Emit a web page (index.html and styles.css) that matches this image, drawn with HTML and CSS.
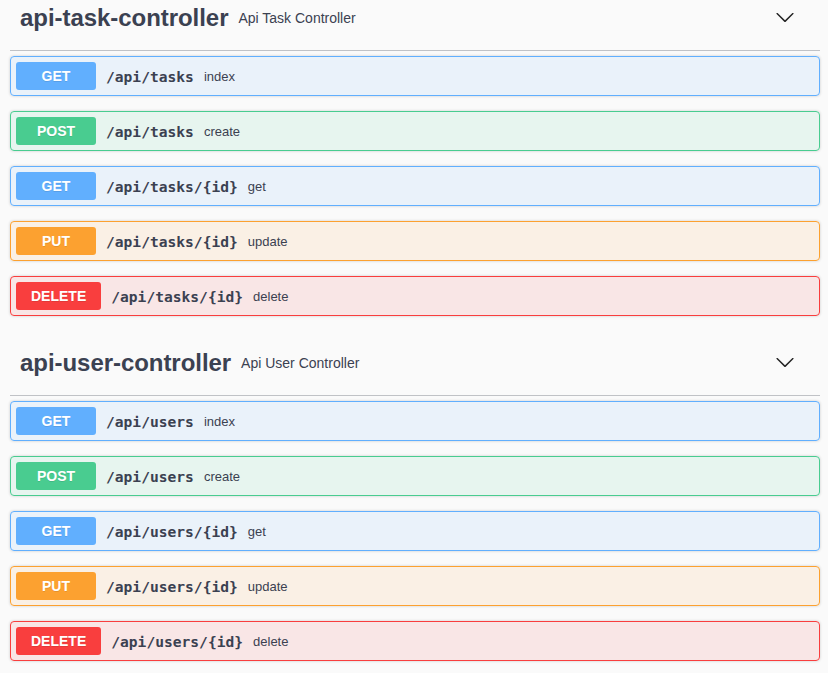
FILE: index.html
```html
<!DOCTYPE html>
<html>
<head>
<meta charset="utf-8">
<link rel="stylesheet" href="styles.css">
</head>
<body>
<div class="page">
  <section class="tag-section">
    <h3 class="tag">
      <span class="tag-name">api-task-controller</span>
      <small class="tag-desc">Api Task Controller</small>
      <svg class="arrow" viewBox="0 0 20 20" width="20" height="20"><path d="M17.418 6.109c.272-.268.709-.268.979 0s.271.701 0 .969l-7.908 7.83c-.27.268-.707.268-.979 0l-7.908-7.830c-.27-.268-.27-.701 0-.969.271-.268.709-.268.979 0L10 13.25l7.418-7.141z"/></svg>
    </h3>
    <div class="opblock get"><span class="method">GET</span><span class="path">/api/tasks</span><span class="desc">index</span></div>
    <div class="opblock post"><span class="method">POST</span><span class="path">/api/tasks</span><span class="desc">create</span></div>
    <div class="opblock get"><span class="method">GET</span><span class="path">/api/tasks/{id}</span><span class="desc">get</span></div>
    <div class="opblock put"><span class="method">PUT</span><span class="path">/api/tasks/{id}</span><span class="desc">update</span></div>
    <div class="opblock delete"><span class="method">DELETE</span><span class="path">/api/tasks/{id}</span><span class="desc">delete</span></div>
  </section>
  <section class="tag-section">
    <h3 class="tag">
      <span class="tag-name">api-user-controller</span>
      <small class="tag-desc">Api User Controller</small>
      <svg class="arrow" viewBox="0 0 20 20" width="20" height="20"><path d="M17.418 6.109c.272-.268.709-.268.979 0s.271.701 0 .969l-7.908 7.83c-.27.268-.707.268-.979 0l-7.908-7.830c-.27-.268-.27-.701 0-.969.271-.268.709-.268.979 0L10 13.25l7.418-7.141z"/></svg>
    </h3>
    <div class="opblock get"><span class="method">GET</span><span class="path">/api/users</span><span class="desc">index</span></div>
    <div class="opblock post"><span class="method">POST</span><span class="path">/api/users</span><span class="desc">create</span></div>
    <div class="opblock get"><span class="method">GET</span><span class="path">/api/users/{id}</span><span class="desc">get</span></div>
    <div class="opblock put"><span class="method">PUT</span><span class="path">/api/users/{id}</span><span class="desc">update</span></div>
    <div class="opblock delete"><span class="method">DELETE</span><span class="path">/api/users/{id}</span><span class="desc">delete</span></div>
  </section>
</div>
</body>
</html>
```

FILE: styles.css
```css
html, body {
  margin: 0;
  padding: 0;
  background: #fafafa;
  overflow: hidden;
}
body {
  font-family: "Liberation Sans", Arial, sans-serif;
  color: #3b4151;
}
.page {
  padding: 0 8px 0 10px;
  margin-top: -14px;
}
.tag-section {
  display: flex;
  flex-direction: column;
}
.tag {
  display: flex;
  align-items: center;
  height: 64px;
  box-sizing: content-box;
  margin: 0 0 5px;
  padding: 0 25px 0 10px;
  border-bottom: 1px solid rgba(59, 65, 81, 0.3);
  font-size: 24px;
  font-weight: 700;
  color: #3b4151;
}
.tag-name {
  line-height: 28px;
  letter-spacing: -0.05px;
}
.tag-desc {
  flex: 1;
  font-size: 14px;
  font-weight: 400;
  padding: 0 10px;
  margin-top: -1px;
}
.arrow {
  fill: #222;
  margin-top: -2px;
}
.opblock {
  display: flex;
  align-items: center;
  height: 38px;
  padding: 0 5px;
  margin: 0 0 15px;
  border: 1px solid;
  border-radius: 4px;
  box-shadow: 0 0 3px rgba(0, 0, 0, 0.19);
}
.method {
  min-width: 80px;
  box-sizing: border-box;
  height: 28px;
  line-height: 28px;
  padding: 0 15px;
  border-radius: 3px;
  font-size: 14px;
  font-weight: 700;
  color: #fff;
  text-align: center;
  text-shadow: 0 1px 0 rgba(0, 0, 0, 0.1);
}
.path {
  font-family: "DejaVu Sans Mono", monospace;
  font-size: 14.6px;
  font-weight: 700;
  padding: 0 10px;
  color: #3b4151;
  margin-top: 1px;
}
.desc {
  font-size: 13px;
  color: #3b4151;
}
.get { border-color: #61affe; background: rgba(97, 175, 254, 0.1); }
.get .method { background: #61affe; }
.post { border-color: #49cc90; background: rgba(73, 204, 144, 0.1); }
.post .method { background: #49cc90; }
.put { border-color: #fca130; background: rgba(252, 161, 48, 0.1); }
.put .method { background: #fca130; }
.delete { border-color: #f93e3e; background: rgba(249, 62, 62, 0.1); }
.delete .method { background: #f93e3e; }
```
